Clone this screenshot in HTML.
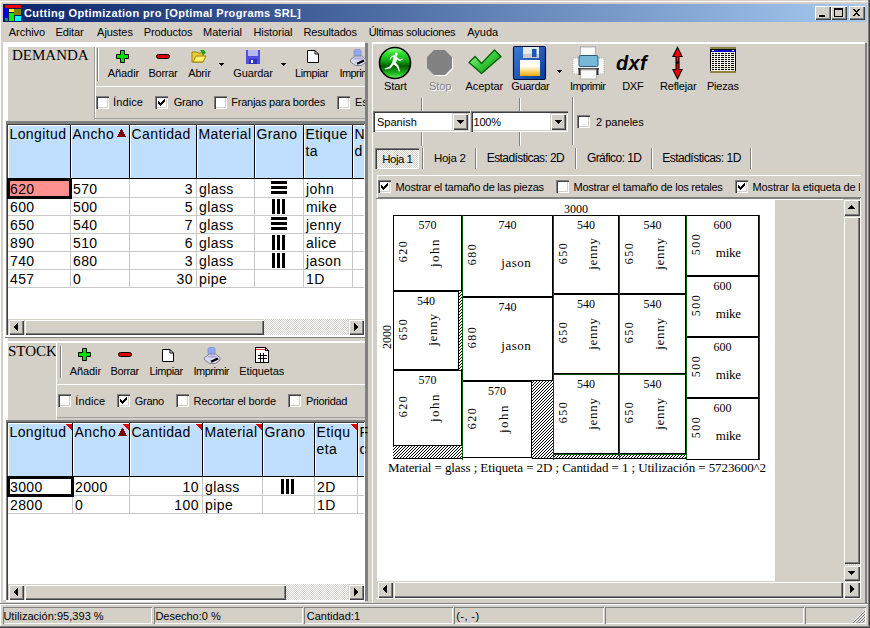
<!DOCTYPE html><html><head><meta charset="utf-8"><style>
html,body{margin:0;padding:0;width:870px;height:628px;overflow:hidden;background:#D4D0C8;}
.a{position:absolute;white-space:pre;}
svg{overflow:visible}
</style></head><body>
<div class="a" style="left:0px;top:1px;width:868px;height:1px;background:#fff;"></div>
<div class="a" style="left:0px;top:1px;width:1px;height:625px;background:#fff;"></div>
<div class="a" style="left:868px;top:0px;width:1px;height:628px;background:#808080;"></div>
<div class="a" style="left:869px;top:0px;width:1px;height:628px;background:#404040;"></div>
<div class="a" style="left:0px;top:626px;width:870px;height:1px;background:#808080;"></div>
<div class="a" style="left:0px;top:627px;width:870px;height:1px;background:#404040;"></div>
<div class="a" style="left:3px;top:4px;width:864px;height:18px;background:linear-gradient(to right,#0A246A,#A6CAF0);"></div>
<svg class="a" style="left:3px;top:4px" width="18" height="18" shape-rendering="crispEdges">
<rect x="0" y="0" width="18" height="18" fill="#0A1A5A"/>
<rect x="2" y="1" width="16" height="3" fill="#F00000"/>
<rect x="1" y="4" width="4" height="10" fill="#0000F0"/>
<rect x="2" y="14" width="3" height="3" fill="#208080"/>
<rect x="6" y="5" width="5" height="3" fill="#FFFF00"/>
<rect x="11" y="5" width="7" height="6" fill="#808000"/>
<rect x="6" y="9" width="5" height="8" fill="#00F000"/>
<rect x="12" y="12" width="6" height="5" fill="#00FFFF"/>
</svg>
<div class="a" style="left:24px;top:7px;font-family:'Liberation Sans', sans-serif;font-size:11px;line-height:12px;color:#fff;font-weight:bold;letter-spacing:0.37px;">Cutting Optimization pro [Optimal Programs SRL]</div>
<div class="a" style="left:815px;top:6px;width:16px;height:14px;background:#D4D0C8;box-shadow: inset 1px 1px #fff, inset -1px -1px #404040, inset -2px -2px #808080;"></div>
<div class="a" style="left:831px;top:6px;width:16px;height:14px;background:#D4D0C8;box-shadow: inset 1px 1px #fff, inset -1px -1px #404040, inset -2px -2px #808080;"></div>
<div class="a" style="left:849px;top:6px;width:16px;height:14px;background:#D4D0C8;box-shadow: inset 1px 1px #fff, inset -1px -1px #404040, inset -2px -2px #808080;"></div>
<svg class="a" style="left:815px;top:6px" width="16" height="14" shape-rendering="crispEdges"><rect x="4" y="9" width="6" height="2" fill="#000"/></svg>
<svg class="a" style="left:831px;top:6px" width="16" height="14" shape-rendering="crispEdges"><path d="M3 2h9v9h-9z M4 4v6h7v-6z" fill="#000" fill-rule="evenodd"/></svg>
<svg class="a" style="left:849px;top:6px" width="16" height="14" shape-rendering="crispEdges"><path d="M4 3h2v1h1v1h1v-1h1v-1h2v1h-1v1h-1v1h-1v1h1v1h1v1h1v1h-2v-1h-1v-1h-1v1h-1v1h-2v-1h1v-1h1v-1h1v-1h-1v-1h-1v-1h-1z" fill="#000"/></svg>
<div class="a" style="left:8.8px;top:25.6px;font-family:'Liberation Sans', sans-serif;font-size:11px;line-height:12px;color:#000;letter-spacing:-0.055px;">Archivo</div>
<div class="a" style="left:55.6px;top:25.6px;font-family:'Liberation Sans', sans-serif;font-size:11px;line-height:12px;color:#000;letter-spacing:-0.125px;">Editar</div>
<div class="a" style="left:97.1px;top:25.6px;font-family:'Liberation Sans', sans-serif;font-size:11px;line-height:12px;color:#000;letter-spacing:-0.04px;">Ajustes</div>
<div class="a" style="left:143.8px;top:25.6px;font-family:'Liberation Sans', sans-serif;font-size:11px;line-height:12px;color:#000;letter-spacing:-0.115px;">Productos</div>
<div class="a" style="left:203.1px;top:25.6px;font-family:'Liberation Sans', sans-serif;font-size:11px;line-height:12px;color:#000;letter-spacing:-0.028px;">Material</div>
<div class="a" style="left:253.5px;top:25.6px;font-family:'Liberation Sans', sans-serif;font-size:11px;line-height:12px;color:#000;letter-spacing:-0.093px;">Historial</div>
<div class="a" style="left:303.5px;top:25.6px;font-family:'Liberation Sans', sans-serif;font-size:11px;line-height:12px;color:#000;letter-spacing:-0.165px;">Resultados</div>
<div class="a" style="left:368.7px;top:25.6px;font-family:'Liberation Sans', sans-serif;font-size:11px;line-height:12px;color:#000;letter-spacing:-0.289px;">Últimas soluciones</div>
<div class="a" style="left:467.2px;top:25.6px;font-family:'Liberation Sans', sans-serif;font-size:11px;line-height:12px;color:#000;letter-spacing:0.0px;">Ayuda</div>
<div class="a" style="left:3px;top:42px;width:362px;height:5px;background:#fff;"></div>
<div class="a" style="left:3px;top:42px;width:5px;height:558px;background:#fff;"></div>
<div class="a" style="left:365px;top:43px;width:3px;height:558px;background:#808080;"></div>
<div class="a" style="left:12px;top:47px;font-family:'Liberation Serif', serif;font-size:15px;line-height:16px;color:#000;">DEMANDA</div>
<div class="a" style="left:94px;top:47px;width:1px;height:73px;background:#A0A0A0;"></div>
<div class="a" style="left:95px;top:47px;width:1px;height:73px;background:#fff;"></div>
<div class="a" style="left:95px;top:47px;width:270px;height:38px;background:#D4D0C8;box-shadow: inset 1px 0 #fff;"></div>
<div class="a" style="left:97px;top:48px;width:1px;height:33px;background:#808080;"></div>
<div class="a" style="left:98px;top:48px;width:1px;height:33px;background:#fff;"></div>
<div class="a" style="left:95px;top:86px;width:270px;height:1px;background:#fff;"></div>
<div class="a" style="left:95px;top:118px;width:270px;height:1px;background:#A0A0A0;"></div>
<svg class="a" style="left:116px;top:50px" width="14" height="14"><path d="M4.5 0.5h4v4h4v4h-4v4h-4v-4h-4v-4h4z" fill="#00E000" stroke="#000" stroke-width="1" stroke-linejoin="round"/></svg>
<div class="a" style="left:107.7px;top:67px;font-family:'Liberation Sans', sans-serif;font-size:11px;line-height:12px;color:#000;letter-spacing:-0.049px;">Añadir</div>
<svg class="a" style="left:156px;top:54px" width="15" height="6"><rect x="0.5" y="0.5" width="13" height="4" rx="2" fill="#E00000" stroke="#000" stroke-width="1"/></svg>
<div class="a" style="left:148.5px;top:67px;font-family:'Liberation Sans', sans-serif;font-size:11px;line-height:12px;color:#000;letter-spacing:-0.26px;">Borrar</div>
<svg class="a" style="left:191px;top:48px" width="16" height="16"><path d="M1 4h5l1 1h5v9h-11z" fill="#E8D040" stroke="#A08000" stroke-width="1"/><path d="M2 14l3-6h10l-3 6z" fill="#FFF070" stroke="#A08000" stroke-width="1"/><path d="M9 2l4 0 2 3-3 2z" fill="#20A020"/></svg>
<div class="a" style="left:188.2px;top:67px;font-family:'Liberation Sans', sans-serif;font-size:11px;line-height:12px;color:#000;letter-spacing:-0.147px;">Abrir</div>
<svg class="a" style="left:219px;top:63px" width="5" height="3" shape-rendering="crispEdges"><path d="M0 0h5v1h-1v1h-1v1h-1v-1h-1v-1h-1z" fill="#000"/></svg>
<svg class="a" style="left:245px;top:49px" width="16" height="16"><path d="M1 1h14v14h-14z" fill="#5050E0"/><rect x="3" y="1" width="10" height="6" fill="#B8B8F0"/><rect x="4" y="10" width="8" height="5" fill="#3030C0"/><rect x="6" y="11" width="2" height="3" fill="#fff"/></svg>
<div class="a" style="left:233.2px;top:67px;font-family:'Liberation Sans', sans-serif;font-size:11px;line-height:12px;color:#000;letter-spacing:-0.108px;">Guardar</div>
<svg class="a" style="left:281px;top:63px" width="5" height="3" shape-rendering="crispEdges"><path d="M0 0h5v1h-1v1h-1v1h-1v-1h-1v-1h-1z" fill="#000"/></svg>
<svg class="a" style="left:307px;top:50px" width="12" height="13"><path d="M0.5 0.5h7.5l3.5 3.5v8.5h-11z" fill="#fff" stroke="#000" stroke-width="1"/><path d="M8 0.5v3.5h3.5" fill="none" stroke="#000" stroke-width="1"/></svg>
<div class="a" style="left:295px;top:67px;font-family:'Liberation Sans', sans-serif;font-size:11px;line-height:12px;color:#000;letter-spacing:-0.411px;">Limpiar</div>
<svg class="a" style="left:350px;top:49px" width="17" height="17"><path d="M4 1.5l2-1h4l1 1v6h-7z" fill="#90A8F8" stroke="#8090D0" stroke-width="0.8"/><path d="M0.5 10.5l5-3.5h6l4.5 3.5v2.5l-4.5 3.5h-6l-5-3.5z" fill="#D8D8F4" stroke="#808088" stroke-width="1"/><path d="M3 10.5l3-2h5l2.5 2z" fill="#A8A8D8"/><path d="M7 14.8l7-3.2" stroke="#000" stroke-width="2.2"/></svg>
<div class="a" style="left:95px;top:46px;width:270px;height:72px;overflow:hidden">
<div class="a" style="left:244.39999999999998px;top:21px;font-family:'Liberation Sans', sans-serif;font-size:11px;line-height:12px;color:#000;letter-spacing:-0.552px;">Imprimir</div>
</div>
<div class="a" style="left:96px;top:96px;width:13px;height:13px;background:#fff;box-shadow: inset 1px 1px #808080, inset 2px 2px #404040, inset -1px -1px #fff, inset -2px -2px #D4D0C8;"></div>
<div class="a" style="left:113.1px;top:96px;font-family:'Liberation Sans', sans-serif;font-size:11px;line-height:12px;color:#000;letter-spacing:0.107px;">Índice</div>
<div class="a" style="left:155px;top:96px;width:13px;height:13px;background:#fff;box-shadow: inset 1px 1px #808080, inset 2px 2px #404040, inset -1px -1px #fff, inset -2px -2px #D4D0C8;"></div>
<svg class="a" style="left:155px;top:96px" width="13" height="13" shape-rendering="crispEdges" fill="#000"><rect x="9" y="3" width="1" height="1"/><rect x="8" y="4" width="1" height="1"/><rect x="9" y="4" width="1" height="1"/><rect x="3" y="5" width="1" height="1"/><rect x="7" y="5" width="1" height="1"/><rect x="8" y="5" width="1" height="1"/><rect x="9" y="5" width="1" height="1"/><rect x="3" y="6" width="1" height="1"/><rect x="4" y="6" width="1" height="1"/><rect x="6" y="6" width="1" height="1"/><rect x="7" y="6" width="1" height="1"/><rect x="8" y="6" width="1" height="1"/><rect x="3" y="7" width="1" height="1"/><rect x="4" y="7" width="1" height="1"/><rect x="5" y="7" width="1" height="1"/><rect x="6" y="7" width="1" height="1"/><rect x="7" y="7" width="1" height="1"/><rect x="4" y="8" width="1" height="1"/><rect x="5" y="8" width="1" height="1"/><rect x="6" y="8" width="1" height="1"/><rect x="5" y="9" width="1" height="1"/></svg>
<div class="a" style="left:173.7px;top:96px;font-family:'Liberation Sans', sans-serif;font-size:11px;line-height:12px;color:#000;letter-spacing:-0.256px;">Grano</div>
<div class="a" style="left:214px;top:96px;width:13px;height:13px;background:#fff;box-shadow: inset 1px 1px #808080, inset 2px 2px #404040, inset -1px -1px #fff, inset -2px -2px #D4D0C8;"></div>
<div class="a" style="left:231.3px;top:96px;font-family:'Liberation Sans', sans-serif;font-size:11px;line-height:12px;color:#000;letter-spacing:-0.25px;">Franjas para bordes</div>
<div class="a" style="left:95px;top:86px;width:270px;height:32px;overflow:hidden">
<div class="a" style="left:242px;top:10px;width:13px;height:13px;background:#fff;box-shadow: inset 1px 1px #808080, inset 2px 2px #404040, inset -1px -1px #fff, inset -2px -2px #D4D0C8;"></div>
<div class="a" style="left:260px;top:10px;font-family:'Liberation Sans', sans-serif;font-size:11px;line-height:12px;color:#000;">Escala</div>
</div>
<div class="a" style="left:6px;top:121px;width:359px;height:1px;background:#808080;"></div>
<div class="a" style="left:6px;top:122px;width:359px;height:2px;background:#808080;"></div>
<div class="a" style="left:6px;top:122px;width:1px;height:213px;background:#808080;"></div>
<div class="a" style="left:7px;top:124px;width:358px;height:1px;background:#404040;"></div>
<div class="a" style="left:7px;top:124px;width:1px;height:211px;background:#404040;"></div>
<div class="a" style="left:6px;top:335px;width:359px;height:2px;background:#fff;"></div>
<div class="a" style="left:8px;top:125px;width:357px;height:210px;background:#fff;"></div>
<div class="a" style="left:8px;top:125px;width:357px;height:53px;background:#C0DFFF;"></div>
<div class="a" style="left:8px;top:125px;width:357px;height:1px;background:#fff;"></div>
<div class="a" style="left:8px;top:178px;width:357px;height:1px;background:#000;"></div>
<div class="a" style="left:8px;top:125px;width:1px;height:53px;background:#fff;"></div>
<div class="a" style="left:70px;top:125px;width:1px;height:54px;background:#000;"></div>
<div class="a" style="left:71px;top:125px;width:1px;height:53px;background:#fff;"></div>
<div class="a" style="left:129px;top:125px;width:1px;height:54px;background:#000;"></div>
<div class="a" style="left:130px;top:125px;width:1px;height:53px;background:#fff;"></div>
<div class="a" style="left:196px;top:125px;width:1px;height:54px;background:#000;"></div>
<div class="a" style="left:197px;top:125px;width:1px;height:53px;background:#fff;"></div>
<div class="a" style="left:254px;top:125px;width:1px;height:54px;background:#000;"></div>
<div class="a" style="left:255px;top:125px;width:1px;height:53px;background:#fff;"></div>
<div class="a" style="left:303px;top:125px;width:1px;height:54px;background:#000;"></div>
<div class="a" style="left:304px;top:125px;width:1px;height:53px;background:#fff;"></div>
<div class="a" style="left:352px;top:125px;width:1px;height:54px;background:#000;"></div>
<div class="a" style="left:353px;top:125px;width:1px;height:53px;background:#fff;"></div>
<div class="a" style="left:9.5px;top:126px;font-family:'Liberation Sans', sans-serif;font-size:14px;line-height:16px;color:#000;letter-spacing:0.4px;">Longitud</div>
<div class="a" style="left:72.5px;top:126px;font-family:'Liberation Sans', sans-serif;font-size:14px;line-height:16px;color:#000;letter-spacing:0.4px;">Ancho</div>
<div class="a" style="left:131.5px;top:126px;font-family:'Liberation Sans', sans-serif;font-size:14px;line-height:16px;color:#000;letter-spacing:0.4px;">Cantidad</div>
<div class="a" style="left:198.5px;top:126px;font-family:'Liberation Sans', sans-serif;font-size:14px;line-height:16px;color:#000;letter-spacing:0.4px;">Material</div>
<div class="a" style="left:256.5px;top:126px;font-family:'Liberation Sans', sans-serif;font-size:14px;line-height:16px;color:#000;letter-spacing:0.4px;">Grano</div>
<div class="a" style="left:305.5px;top:126px;font-family:'Liberation Sans', sans-serif;font-size:14px;line-height:16px;color:#000;letter-spacing:0.4px;">Etique</div>
<div class="a" style="left:305.5px;top:143px;font-family:'Liberation Sans', sans-serif;font-size:14px;line-height:16px;color:#000;letter-spacing:0.4px;">ta</div>
<div class="a" style="left:354.5px;top:126px;font-family:'Liberation Sans', sans-serif;font-size:14px;line-height:16px;color:#000;letter-spacing:0.4px;">N</div>
<div class="a" style="left:354.5px;top:143px;font-family:'Liberation Sans', sans-serif;font-size:14px;line-height:16px;color:#000;letter-spacing:0.4px;">d</div>
<div class="a" style="left:8px;top:197px;width:357px;height:1px;background:#C8C8C8;"></div>
<div class="a" style="left:8px;top:215px;width:357px;height:1px;background:#C8C8C8;"></div>
<div class="a" style="left:8px;top:233px;width:357px;height:1px;background:#C8C8C8;"></div>
<div class="a" style="left:8px;top:251px;width:357px;height:1px;background:#C8C8C8;"></div>
<div class="a" style="left:8px;top:269px;width:357px;height:1px;background:#C8C8C8;"></div>
<div class="a" style="left:8px;top:287px;width:357px;height:1px;background:#C8C8C8;"></div>
<div class="a" style="left:70px;top:179px;width:1px;height:108px;background:#C8C8C8;"></div>
<div class="a" style="left:129px;top:179px;width:1px;height:108px;background:#C8C8C8;"></div>
<div class="a" style="left:196px;top:179px;width:1px;height:108px;background:#C8C8C8;"></div>
<div class="a" style="left:254px;top:179px;width:1px;height:108px;background:#C8C8C8;"></div>
<div class="a" style="left:303px;top:179px;width:1px;height:108px;background:#C8C8C8;"></div>
<div class="a" style="left:352px;top:179px;width:1px;height:108px;background:#C8C8C8;"></div>
<div class="a" style="left:7px;top:178px;width:65px;height:21px;background:#FF9090;box-shadow: inset 0 0 0 3px #000;"></div>
<div class="a" style="left:10px;top:181px;font-family:'Liberation Sans', sans-serif;font-size:14px;line-height:16px;color:#000;letter-spacing:0.4px;">620</div>
<div class="a" style="left:73px;top:181px;font-family:'Liberation Sans', sans-serif;font-size:14px;line-height:16px;color:#000;letter-spacing:0.4px;">570</div>
<div class="a" style="right:677.1px;top:181px;font-family:'Liberation Sans', sans-serif;font-size:14px;line-height:16px;color:#000;letter-spacing:0.4px;">3</div>
<div class="a" style="left:199px;top:181px;font-family:'Liberation Sans', sans-serif;font-size:14px;line-height:16px;color:#000;letter-spacing:0.4px;">glass</div>
<svg class="a" style="left:271px;top:181px" width="16" height="13" shape-rendering="crispEdges"><rect x="0" y="0" width="16" height="3" fill="#000"/><rect x="0" y="5" width="16" height="3" fill="#000"/><rect x="0" y="10" width="16" height="3" fill="#000"/></svg>
<div class="a" style="left:306px;top:181px;font-family:'Liberation Sans', sans-serif;font-size:14px;line-height:16px;color:#000;letter-spacing:0.4px;">john</div>
<div class="a" style="left:10px;top:199px;font-family:'Liberation Sans', sans-serif;font-size:14px;line-height:16px;color:#000;letter-spacing:0.4px;">600</div>
<div class="a" style="left:73px;top:199px;font-family:'Liberation Sans', sans-serif;font-size:14px;line-height:16px;color:#000;letter-spacing:0.4px;">500</div>
<div class="a" style="right:677.1px;top:199px;font-family:'Liberation Sans', sans-serif;font-size:14px;line-height:16px;color:#000;letter-spacing:0.4px;">5</div>
<div class="a" style="left:199px;top:199px;font-family:'Liberation Sans', sans-serif;font-size:14px;line-height:16px;color:#000;letter-spacing:0.4px;">glass</div>
<svg class="a" style="left:272px;top:199px" width="14" height="15" shape-rendering="crispEdges"><rect x="0" y="0" width="3" height="15" fill="#000"/><rect x="5" y="0" width="3" height="15" fill="#000"/><rect x="10" y="0" width="3" height="15" fill="#000"/></svg>
<div class="a" style="left:306px;top:199px;font-family:'Liberation Sans', sans-serif;font-size:14px;line-height:16px;color:#000;letter-spacing:0.4px;">mike</div>
<div class="a" style="left:10px;top:217px;font-family:'Liberation Sans', sans-serif;font-size:14px;line-height:16px;color:#000;letter-spacing:0.4px;">650</div>
<div class="a" style="left:73px;top:217px;font-family:'Liberation Sans', sans-serif;font-size:14px;line-height:16px;color:#000;letter-spacing:0.4px;">540</div>
<div class="a" style="right:677.1px;top:217px;font-family:'Liberation Sans', sans-serif;font-size:14px;line-height:16px;color:#000;letter-spacing:0.4px;">7</div>
<div class="a" style="left:199px;top:217px;font-family:'Liberation Sans', sans-serif;font-size:14px;line-height:16px;color:#000;letter-spacing:0.4px;">glass</div>
<svg class="a" style="left:271px;top:217px" width="16" height="13" shape-rendering="crispEdges"><rect x="0" y="0" width="16" height="3" fill="#000"/><rect x="0" y="5" width="16" height="3" fill="#000"/><rect x="0" y="10" width="16" height="3" fill="#000"/></svg>
<div class="a" style="left:306px;top:217px;font-family:'Liberation Sans', sans-serif;font-size:14px;line-height:16px;color:#000;letter-spacing:0.4px;">jenny</div>
<div class="a" style="left:10px;top:235px;font-family:'Liberation Sans', sans-serif;font-size:14px;line-height:16px;color:#000;letter-spacing:0.4px;">890</div>
<div class="a" style="left:73px;top:235px;font-family:'Liberation Sans', sans-serif;font-size:14px;line-height:16px;color:#000;letter-spacing:0.4px;">510</div>
<div class="a" style="right:677.1px;top:235px;font-family:'Liberation Sans', sans-serif;font-size:14px;line-height:16px;color:#000;letter-spacing:0.4px;">6</div>
<div class="a" style="left:199px;top:235px;font-family:'Liberation Sans', sans-serif;font-size:14px;line-height:16px;color:#000;letter-spacing:0.4px;">glass</div>
<svg class="a" style="left:272px;top:235px" width="14" height="15" shape-rendering="crispEdges"><rect x="0" y="0" width="3" height="15" fill="#000"/><rect x="5" y="0" width="3" height="15" fill="#000"/><rect x="10" y="0" width="3" height="15" fill="#000"/></svg>
<div class="a" style="left:306px;top:235px;font-family:'Liberation Sans', sans-serif;font-size:14px;line-height:16px;color:#000;letter-spacing:0.4px;">alice</div>
<div class="a" style="left:10px;top:253px;font-family:'Liberation Sans', sans-serif;font-size:14px;line-height:16px;color:#000;letter-spacing:0.4px;">740</div>
<div class="a" style="left:73px;top:253px;font-family:'Liberation Sans', sans-serif;font-size:14px;line-height:16px;color:#000;letter-spacing:0.4px;">680</div>
<div class="a" style="right:677.1px;top:253px;font-family:'Liberation Sans', sans-serif;font-size:14px;line-height:16px;color:#000;letter-spacing:0.4px;">3</div>
<div class="a" style="left:199px;top:253px;font-family:'Liberation Sans', sans-serif;font-size:14px;line-height:16px;color:#000;letter-spacing:0.4px;">glass</div>
<svg class="a" style="left:272px;top:253px" width="14" height="15" shape-rendering="crispEdges"><rect x="0" y="0" width="3" height="15" fill="#000"/><rect x="5" y="0" width="3" height="15" fill="#000"/><rect x="10" y="0" width="3" height="15" fill="#000"/></svg>
<div class="a" style="left:306px;top:253px;font-family:'Liberation Sans', sans-serif;font-size:14px;line-height:16px;color:#000;letter-spacing:0.4px;">jason</div>
<div class="a" style="left:10px;top:271px;font-family:'Liberation Sans', sans-serif;font-size:14px;line-height:16px;color:#000;letter-spacing:0.4px;">457</div>
<div class="a" style="left:73px;top:271px;font-family:'Liberation Sans', sans-serif;font-size:14px;line-height:16px;color:#000;letter-spacing:0.4px;">0</div>
<div class="a" style="right:677.1px;top:271px;font-family:'Liberation Sans', sans-serif;font-size:14px;line-height:16px;color:#000;letter-spacing:0.4px;">30</div>
<div class="a" style="left:199px;top:271px;font-family:'Liberation Sans', sans-serif;font-size:14px;line-height:16px;color:#000;letter-spacing:0.4px;">pipe</div>
<div class="a" style="left:306px;top:271px;font-family:'Liberation Sans', sans-serif;font-size:14px;line-height:16px;color:#000;letter-spacing:0.4px;">1D</div>
<div class="a" style="left:8px;top:319px;width:356px;height:16px;background:repeating-conic-gradient(#D4D0C8 0% 25%, #fff 0% 50%) 0 0/2px 2px;"></div>
<div class="a" style="left:8px;top:319px;width:16px;height:16px;background:#D4D0C8;box-shadow: inset 1px 1px #D4D0C8, inset 2px 2px #fff, inset -1px -1px #404040, inset -2px -2px #808080;"></div>
<svg class="a" style="left:13px;top:323px" width="5" height="8" shape-rendering="crispEdges"><path d="M4 0h1v8h-1v-1h-1v-1h-1v-1h-1v-2h1v-1h1v-1h1z" fill="#000"/></svg>
<div class="a" style="left:24px;top:319px;width:240px;height:16px;background:#D4D0C8;box-shadow: inset 1px 1px #D4D0C8, inset 2px 2px #fff, inset -1px -1px #404040, inset -2px -2px #808080;"></div>
<div class="a" style="left:348px;top:319px;width:16px;height:16px;background:#D4D0C8;box-shadow: inset 1px 1px #D4D0C8, inset 2px 2px #fff, inset -1px -1px #404040, inset -2px -2px #808080;"></div>
<svg class="a" style="left:354px;top:323px" width="5" height="8" shape-rendering="crispEdges"><path d="M0 0h1v1h1v1h1v1h1v2h-1v1h-1v1h-1v1h-1z" fill="#000"/></svg>
<div class="a" style="left:364px;top:124px;width:1px;height:213px;background:#fff;"></div>
<svg class="a" style="left:117px;top:129px" width="9" height="8" shape-rendering="crispEdges"><path d="M4 0h1v1h1v2h1v2h1v2h1v1h-9v-1h1v-2h1v-2h1v-2h1z" fill="#800000"/></svg>
<div class="a" style="left:6px;top:336px;width:359px;height:1px;background:#fff;"></div>
<div class="a" style="left:5px;top:337px;width:360px;height:1px;background:#808080;"></div>
<div class="a" style="left:5px;top:341px;width:360px;height:2px;background:#fff;"></div>
<div class="a" style="left:8px;top:343px;font-family:'Liberation Serif', serif;font-size:15px;line-height:16px;color:#000;">STOCK</div>
<div class="a" style="left:56px;top:343px;width:1px;height:77px;background:#fff;"></div>
<div class="a" style="left:60px;top:346px;width:1px;height:32px;background:#808080;"></div>
<div class="a" style="left:61px;top:346px;width:1px;height:32px;background:#fff;"></div>
<div class="a" style="left:57px;top:384px;width:308px;height:1px;background:#fff;"></div>
<div class="a" style="left:57px;top:417px;width:308px;height:1px;background:#A0A0A0;"></div>
<svg class="a" style="left:78px;top:348px" width="14" height="14"><path d="M4.5 0.5h4v4h4v4h-4v4h-4v-4h-4v-4h4z" fill="#00E000" stroke="#000" stroke-width="1" stroke-linejoin="round"/></svg>
<div class="a" style="left:69.8px;top:364.5px;font-family:'Liberation Sans', sans-serif;font-size:11px;line-height:12px;color:#000;letter-spacing:-0.099px;">Añadir</div>
<svg class="a" style="left:118px;top:352px" width="15" height="6"><rect x="0.5" y="0.5" width="13" height="4" rx="2" fill="#E00000" stroke="#000" stroke-width="1"/></svg>
<div class="a" style="left:110.6px;top:364.5px;font-family:'Liberation Sans', sans-serif;font-size:11px;line-height:12px;color:#000;letter-spacing:-0.394px;">Borrar</div>
<svg class="a" style="left:162px;top:349px" width="12" height="13"><path d="M0.5 0.5h7.5l3.5 3.5v8.5h-11z" fill="#fff" stroke="#000" stroke-width="1"/><path d="M8 0.5v3.5h3.5" fill="none" stroke="#000" stroke-width="1"/></svg>
<div class="a" style="left:149.5px;top:364.5px;font-family:'Liberation Sans', sans-serif;font-size:11px;line-height:12px;color:#000;letter-spacing:-0.397px;">Limpiar</div>
<svg class="a" style="left:204px;top:347px" width="17" height="17"><path d="M4 1.5l2-1h4l1 1v6h-7z" fill="#90A8F8" stroke="#8090D0" stroke-width="0.8"/><path d="M0.5 10.5l5-3.5h6l4.5 3.5v2.5l-4.5 3.5h-6l-5-3.5z" fill="#D8D8F4" stroke="#808088" stroke-width="1"/><path d="M3 10.5l3-2h5l2.5 2z" fill="#A8A8D8"/><path d="M7 14.8l7-3.2" stroke="#000" stroke-width="2.2"/></svg>
<div class="a" style="left:193.6px;top:364.5px;font-family:'Liberation Sans', sans-serif;font-size:11px;line-height:12px;color:#000;letter-spacing:-0.552px;">Imprimir</div>
<svg class="a" style="left:255px;top:347px" width="15" height="17" shape-rendering="crispEdges"><path d="M0.5 0.5h10l3 3v12h-13z" fill="#fff" stroke="#000" stroke-width="1"/><path d="M10.5 0.5v3h3" fill="none" stroke="#000" stroke-width="1"/><rect x="1" y="2" width="9" height="1" fill="#E03030"/><path d="M5.5 6v9M8.5 6v9M3 8.5h9M3 11.5h9" stroke="#000" stroke-width="1"/></svg>
<div class="a" style="left:239.3px;top:364.5px;font-family:'Liberation Sans', sans-serif;font-size:11px;line-height:12px;color:#000;letter-spacing:-0.119px;">Etiquetas</div>
<div class="a" style="left:58px;top:394px;width:13px;height:13px;background:#fff;box-shadow: inset 1px 1px #808080, inset 2px 2px #404040, inset -1px -1px #fff, inset -2px -2px #D4D0C8;"></div>
<div class="a" style="left:75.3px;top:395px;font-family:'Liberation Sans', sans-serif;font-size:11px;line-height:12px;color:#000;letter-spacing:0.107px;">Índice</div>
<div class="a" style="left:117px;top:394px;width:13px;height:13px;background:#fff;box-shadow: inset 1px 1px #808080, inset 2px 2px #404040, inset -1px -1px #fff, inset -2px -2px #D4D0C8;"></div>
<svg class="a" style="left:117px;top:394px" width="13" height="13" shape-rendering="crispEdges" fill="#000"><rect x="9" y="3" width="1" height="1"/><rect x="8" y="4" width="1" height="1"/><rect x="9" y="4" width="1" height="1"/><rect x="3" y="5" width="1" height="1"/><rect x="7" y="5" width="1" height="1"/><rect x="8" y="5" width="1" height="1"/><rect x="9" y="5" width="1" height="1"/><rect x="3" y="6" width="1" height="1"/><rect x="4" y="6" width="1" height="1"/><rect x="6" y="6" width="1" height="1"/><rect x="7" y="6" width="1" height="1"/><rect x="8" y="6" width="1" height="1"/><rect x="3" y="7" width="1" height="1"/><rect x="4" y="7" width="1" height="1"/><rect x="5" y="7" width="1" height="1"/><rect x="6" y="7" width="1" height="1"/><rect x="7" y="7" width="1" height="1"/><rect x="4" y="8" width="1" height="1"/><rect x="5" y="8" width="1" height="1"/><rect x="6" y="8" width="1" height="1"/><rect x="5" y="9" width="1" height="1"/></svg>
<div class="a" style="left:134.7px;top:395px;font-family:'Liberation Sans', sans-serif;font-size:11px;line-height:12px;color:#000;letter-spacing:-0.256px;">Grano</div>
<div class="a" style="left:176px;top:394px;width:13px;height:13px;background:#fff;box-shadow: inset 1px 1px #808080, inset 2px 2px #404040, inset -1px -1px #fff, inset -2px -2px #D4D0C8;"></div>
<div class="a" style="left:193.6px;top:395px;font-family:'Liberation Sans', sans-serif;font-size:11px;line-height:12px;color:#000;letter-spacing:-0.159px;">Recortar el borde</div>
<div class="a" style="left:288px;top:394px;width:13px;height:13px;background:#fff;box-shadow: inset 1px 1px #808080, inset 2px 2px #404040, inset -1px -1px #fff, inset -2px -2px #D4D0C8;"></div>
<div class="a" style="left:305.9px;top:395px;font-family:'Liberation Sans', sans-serif;font-size:11px;line-height:12px;color:#000;letter-spacing:-0.303px;">Prioridad</div>
<div class="a" style="left:6px;top:420px;width:359px;height:2px;background:#808080;"></div>
<div class="a" style="left:6px;top:420px;width:1px;height:180px;background:#808080;"></div>
<div class="a" style="left:7px;top:422px;width:358px;height:1px;background:#404040;"></div>
<div class="a" style="left:7px;top:422px;width:1px;height:178px;background:#404040;"></div>
<div class="a" style="left:6px;top:600px;width:359px;height:2px;background:#fff;"></div>
<div class="a" style="left:8px;top:423px;width:357px;height:177px;background:#fff;"></div>
<div class="a" style="left:8px;top:423px;width:357px;height:53px;background:#C0DFFF;"></div>
<div class="a" style="left:8px;top:423px;width:357px;height:1px;background:#fff;"></div>
<div class="a" style="left:8px;top:476px;width:357px;height:1px;background:#000;"></div>
<div class="a" style="left:8px;top:423px;width:1px;height:53px;background:#fff;"></div>
<div class="a" style="left:72px;top:423px;width:1px;height:54px;background:#000;"></div>
<div class="a" style="left:73px;top:423px;width:1px;height:53px;background:#fff;"></div>
<div class="a" style="left:129px;top:423px;width:1px;height:54px;background:#000;"></div>
<div class="a" style="left:130px;top:423px;width:1px;height:53px;background:#fff;"></div>
<div class="a" style="left:202px;top:423px;width:1px;height:54px;background:#000;"></div>
<div class="a" style="left:203px;top:423px;width:1px;height:53px;background:#fff;"></div>
<div class="a" style="left:262px;top:423px;width:1px;height:54px;background:#000;"></div>
<div class="a" style="left:263px;top:423px;width:1px;height:53px;background:#fff;"></div>
<div class="a" style="left:314px;top:423px;width:1px;height:54px;background:#000;"></div>
<div class="a" style="left:315px;top:423px;width:1px;height:53px;background:#fff;"></div>
<div class="a" style="left:357px;top:423px;width:1px;height:54px;background:#000;"></div>
<div class="a" style="left:358px;top:423px;width:1px;height:53px;background:#fff;"></div>
<div class="a" style="left:9.5px;top:424px;font-family:'Liberation Sans', sans-serif;font-size:14px;line-height:16px;color:#000;letter-spacing:0.4px;">Longitud</div>
<div class="a" style="left:74.5px;top:424px;font-family:'Liberation Sans', sans-serif;font-size:14px;line-height:16px;color:#000;letter-spacing:0.4px;">Ancho</div>
<div class="a" style="left:131.5px;top:424px;font-family:'Liberation Sans', sans-serif;font-size:14px;line-height:16px;color:#000;letter-spacing:0.4px;">Cantidad</div>
<div class="a" style="left:204.5px;top:424px;font-family:'Liberation Sans', sans-serif;font-size:14px;line-height:16px;color:#000;letter-spacing:0.4px;">Material</div>
<div class="a" style="left:264.5px;top:424px;font-family:'Liberation Sans', sans-serif;font-size:14px;line-height:16px;color:#000;letter-spacing:0.4px;">Grano</div>
<div class="a" style="left:316.5px;top:424px;font-family:'Liberation Sans', sans-serif;font-size:14px;line-height:16px;color:#000;letter-spacing:0.4px;">Etiqu</div>
<div class="a" style="left:316.5px;top:441px;font-family:'Liberation Sans', sans-serif;font-size:14px;line-height:16px;color:#000;letter-spacing:0.4px;">eta</div>
<div class="a" style="left:359.5px;top:424px;font-family:'Liberation Sans', sans-serif;font-size:14px;line-height:16px;color:#000;letter-spacing:0.4px;">F</div>
<div class="a" style="left:359.5px;top:441px;font-family:'Liberation Sans', sans-serif;font-size:14px;line-height:16px;color:#000;letter-spacing:0.4px;">c</div>
<svg class="a" style="left:66px;top:424px" width="6" height="6" shape-rendering="crispEdges"><path d="M0 0h6v6h-1v-1h-1v-1h-1v-1h-1v-1h-1v-1h-1z" fill="#E00000"/></svg>
<svg class="a" style="left:123px;top:424px" width="6" height="6" shape-rendering="crispEdges"><path d="M0 0h6v6h-1v-1h-1v-1h-1v-1h-1v-1h-1v-1h-1z" fill="#E00000"/></svg>
<svg class="a" style="left:196px;top:424px" width="6" height="6" shape-rendering="crispEdges"><path d="M0 0h6v6h-1v-1h-1v-1h-1v-1h-1v-1h-1v-1h-1z" fill="#E00000"/></svg>
<svg class="a" style="left:256px;top:424px" width="6" height="6" shape-rendering="crispEdges"><path d="M0 0h6v6h-1v-1h-1v-1h-1v-1h-1v-1h-1v-1h-1z" fill="#E00000"/></svg>
<svg class="a" style="left:351px;top:424px" width="6" height="6" shape-rendering="crispEdges"><path d="M0 0h6v6h-1v-1h-1v-1h-1v-1h-1v-1h-1v-1h-1z" fill="#E00000"/></svg>
<div class="a" style="left:8px;top:495px;width:357px;height:1px;background:#C8C8C8;"></div>
<div class="a" style="left:8px;top:513px;width:357px;height:1px;background:#C8C8C8;"></div>
<div class="a" style="left:72px;top:477px;width:1px;height:36px;background:#C8C8C8;"></div>
<div class="a" style="left:129px;top:477px;width:1px;height:36px;background:#C8C8C8;"></div>
<div class="a" style="left:202px;top:477px;width:1px;height:36px;background:#C8C8C8;"></div>
<div class="a" style="left:262px;top:477px;width:1px;height:36px;background:#C8C8C8;"></div>
<div class="a" style="left:314px;top:477px;width:1px;height:36px;background:#C8C8C8;"></div>
<div class="a" style="left:357px;top:477px;width:1px;height:36px;background:#C8C8C8;"></div>
<div class="a" style="left:7px;top:476px;width:67px;height:21px;background:#fff;box-shadow: inset 0 0 0 3px #000;"></div>
<div class="a" style="left:10px;top:479px;font-family:'Liberation Sans', sans-serif;font-size:14px;line-height:16px;color:#000;letter-spacing:0.4px;">3000</div>
<div class="a" style="left:75px;top:479px;font-family:'Liberation Sans', sans-serif;font-size:14px;line-height:16px;color:#000;letter-spacing:0.4px;">2000</div>
<div class="a" style="right:671.1px;top:479px;font-family:'Liberation Sans', sans-serif;font-size:14px;line-height:16px;color:#000;letter-spacing:0.4px;">10</div>
<div class="a" style="left:205px;top:479px;font-family:'Liberation Sans', sans-serif;font-size:14px;line-height:16px;color:#000;letter-spacing:0.4px;">glass</div>
<svg class="a" style="left:281px;top:479px" width="14" height="15" shape-rendering="crispEdges"><rect x="0" y="0" width="3" height="15" fill="#000"/><rect x="5" y="0" width="3" height="15" fill="#000"/><rect x="10" y="0" width="3" height="15" fill="#000"/></svg>
<div class="a" style="left:317px;top:479px;font-family:'Liberation Sans', sans-serif;font-size:14px;line-height:16px;color:#000;letter-spacing:0.4px;">2D</div>
<div class="a" style="left:10px;top:497px;font-family:'Liberation Sans', sans-serif;font-size:14px;line-height:16px;color:#000;letter-spacing:0.4px;">2800</div>
<div class="a" style="left:75px;top:497px;font-family:'Liberation Sans', sans-serif;font-size:14px;line-height:16px;color:#000;letter-spacing:0.4px;">0</div>
<div class="a" style="right:671.1px;top:497px;font-family:'Liberation Sans', sans-serif;font-size:14px;line-height:16px;color:#000;letter-spacing:0.4px;">100</div>
<div class="a" style="left:205px;top:497px;font-family:'Liberation Sans', sans-serif;font-size:14px;line-height:16px;color:#000;letter-spacing:0.4px;">pipe</div>
<div class="a" style="left:317px;top:497px;font-family:'Liberation Sans', sans-serif;font-size:14px;line-height:16px;color:#000;letter-spacing:0.4px;">1D</div>
<div class="a" style="left:8px;top:584px;width:356px;height:16px;background:repeating-conic-gradient(#D4D0C8 0% 25%, #fff 0% 50%) 0 0/2px 2px;"></div>
<div class="a" style="left:8px;top:584px;width:16px;height:16px;background:#D4D0C8;box-shadow: inset 1px 1px #D4D0C8, inset 2px 2px #fff, inset -1px -1px #404040, inset -2px -2px #808080;"></div>
<svg class="a" style="left:13px;top:588px" width="5" height="8" shape-rendering="crispEdges"><path d="M4 0h1v8h-1v-1h-1v-1h-1v-1h-1v-2h1v-1h1v-1h1z" fill="#000"/></svg>
<div class="a" style="left:24px;top:584px;width:262px;height:16px;background:#D4D0C8;box-shadow: inset 1px 1px #D4D0C8, inset 2px 2px #fff, inset -1px -1px #404040, inset -2px -2px #808080;"></div>
<div class="a" style="left:348px;top:584px;width:16px;height:16px;background:#D4D0C8;box-shadow: inset 1px 1px #D4D0C8, inset 2px 2px #fff, inset -1px -1px #404040, inset -2px -2px #808080;"></div>
<svg class="a" style="left:354px;top:588px" width="5" height="8" shape-rendering="crispEdges"><path d="M0 0h1v1h1v1h1v1h1v2h-1v1h-1v1h-1v1h-1z" fill="#000"/></svg>
<div class="a" style="left:364px;top:422px;width:1px;height:180px;background:#fff;"></div>
<svg class="a" style="left:118px;top:428px" width="9" height="8" shape-rendering="crispEdges"><path d="M4 0h1v1h1v2h1v2h1v2h1v1h-9v-1h1v-2h1v-2h1v-2h1z" fill="#800000"/></svg>
<div class="a" style="left:372px;top:42px;width:493px;height:2px;background:#fff;"></div>
<div class="a" style="left:372px;top:42px;width:1px;height:562px;background:#fff;"></div>
<div class="a" style="left:865px;top:43px;width:2px;height:561px;background:#808080;"></div>
<svg class="a" style="left:378px;top:46px" width="34" height="34">
<defs><linearGradient id="gstart" x1="0" y1="0" x2="0" y2="1">
<stop offset="0" stop-color="#A8FFA8"/><stop offset="0.18" stop-color="#30E030"/><stop offset="0.45" stop-color="#10A010"/><stop offset="0.6" stop-color="#005A00"/><stop offset="0.85" stop-color="#20C020"/><stop offset="1" stop-color="#70F070"/></linearGradient></defs>
<circle cx="17" cy="17" r="15.5" fill="url(#gstart)" stroke="#000" stroke-width="1.6"/>
<path d="M18.5 6.5c1.2 0 1.6 1.2 1 2.2l-1 2 3.5 2.8 2.5-1.2 0.6 0.9-3.2 2-2.8-1.6-1.2 3.2 2.6 3 1.6 5.4-1.2 0.4-2.2-4.8-3-2.2-3 3.6-5.6 1.4-0.3-1.2 4.8-1.8 2.6-4.2 1.4-5.6-1.6 0.4-1.6 2.6-1-0.4 2-3.4 3.2-1c0.2-1.2 0.6-2.4 1.3-2.8z" fill="#F0FFF0"/>
</svg>
<svg class="a" style="left:427px;top:50px" width="28" height="28">
<path d="M8 1h11l7 7v11l-7 7h-11l-7-7v-11z" fill="#fff"/>
<path d="M7 0h11l7 7v11l-7 7h-11l-7-7v-11z" fill="#828282"/>
</svg>
<svg class="a" style="left:468px;top:49px" width="34" height="26">
<defs><linearGradient id="gchk" x1="0" y1="0" x2="1" y2="1"><stop offset="0" stop-color="#C0FFC0"/><stop offset="0.45" stop-color="#40D040"/><stop offset="1" stop-color="#008800"/></linearGradient></defs>
<path d="M1 13.5l6-6 6.5 7 13-13.5 6.5 6.5-19.5 17z" fill="url(#gchk)" stroke="#006000" stroke-width="1.3" stroke-linejoin="round"/>
</svg>
<svg class="a" style="left:513px;top:46px" width="34" height="34">
<defs><linearGradient id="glab" x1="0" y1="0" x2="0" y2="1"><stop offset="0" stop-color="#fff"/><stop offset="0.4" stop-color="#FFFDF0"/><stop offset="0.75" stop-color="#F8D060"/><stop offset="1" stop-color="#F0A800"/></linearGradient>
<linearGradient id="gfl" x1="0" y1="0" x2="1" y2="1"><stop offset="0" stop-color="#3A7CD8"/><stop offset="1" stop-color="#0A3A98"/></linearGradient></defs>
<rect x="0.5" y="0.5" width="32" height="33" rx="1.5" fill="url(#gfl)" stroke="#001040" stroke-width="1.2"/>
<rect x="10" y="1" width="16" height="11" fill="#E8E8E8"/>
<rect x="10" y="8" width="16" height="4" fill="#C8C8C8"/>
<rect x="19" y="3" width="4.5" height="8" fill="#1A5ABA"/>
<rect x="7" y="14" width="20" height="16" fill="url(#glab)"/>
</svg>
<svg class="a" style="left:557px;top:70px" width="5" height="3" shape-rendering="crispEdges"><path d="M0 0h5v1h-1v1h-1v1h-1v-1h-1v-1h-1z" fill="#000"/></svg>
<svg class="a" style="left:572px;top:46px" width="33" height="34">
<rect x="8.5" y="1" width="15" height="10" fill="#FAFAFA" stroke="#A0A0A0" stroke-width="0.8"/>
<path d="M1 12h31v16h-31z" fill="#F4F4F4" stroke="#909090" stroke-width="0.6" stroke-dasharray="1 1"/>
<rect x="7" y="9.5" width="19" height="11" rx="1.5" fill="#76B8D8" stroke="#2A5A78" stroke-width="1"/>
<rect x="6" y="22" width="21" height="1.5" fill="#555"/>
<rect x="8.5" y="24" width="16" height="9" fill="#FAFAFA" stroke="#909090" stroke-width="0.6"/>
<rect x="6.5" y="22" width="2" height="7" fill="#333"/><rect x="24.5" y="22" width="2" height="7" fill="#333"/>
</svg>
<div class="a" style="left:616px;top:52px;font-family:'Liberation Sans', sans-serif;font-size:20px;line-height:22px;color:#000;font-weight:bold;letter-spacing:0.333px;font-style:italic;">dxf</div>
<svg class="a" style="left:672px;top:46px" width="12" height="34">
<path d="M5.5 1.2l4.6 9.3h-3.1v5.7h-3v-5.7h-3.1z" fill="#F00000" stroke="#000" stroke-width="1.1" stroke-linejoin="miter"/>
<path d="M5.5 32.8l-4.6-9.3h3.1v-6.6h3v6.6h3.1z" fill="#F00000" stroke="#000" stroke-width="1.1" stroke-linejoin="miter"/>
<rect x="4" y="15.6" width="3" height="1.6" fill="#000"/>
</svg>
<svg class="a" style="left:710px;top:47px" width="26" height="26" shape-rendering="crispEdges">
<rect x="0" y="0" width="26" height="2" fill="#8C8440"/>
<rect x="0" y="2" width="26" height="23" fill="#000"/>
<rect x="1" y="3" width="24" height="2" fill="#0000D0"/>
<rect x="2" y="3" width="2" height="1" fill="#fff"/><rect x="22" y="3" width="2" height="1" fill="#fff"/>
<rect x="1" y="5" width="24" height="19" fill="#F4F0E4"/>
<rect x="2" y="6" width="2" height="1" fill="#000"/><rect x="5" y="6" width="2" height="1" fill="#000"/><rect x="8" y="6" width="2" height="1" fill="#000"/><rect x="11" y="6" width="3" height="1" fill="#000"/><rect x="15" y="6" width="2" height="1" fill="#000"/><rect x="18" y="6" width="2" height="1" fill="#000"/><rect x="21" y="6" width="3" height="1" fill="#000"/><rect x="2" y="8" width="2" height="1" fill="#000"/><rect x="5" y="8" width="2" height="1" fill="#000"/><rect x="8" y="8" width="2" height="1" fill="#000"/><rect x="11" y="8" width="3" height="1" fill="#000"/><rect x="15" y="8" width="2" height="1" fill="#000"/><rect x="18" y="8" width="2" height="1" fill="#000"/><rect x="21" y="8" width="3" height="1" fill="#000"/><rect x="2" y="10" width="2" height="1" fill="#000"/><rect x="5" y="10" width="2" height="1" fill="#000"/><rect x="8" y="10" width="2" height="1" fill="#000"/><rect x="11" y="10" width="3" height="1" fill="#000"/><rect x="15" y="10" width="2" height="1" fill="#000"/><rect x="18" y="10" width="2" height="1" fill="#000"/><rect x="21" y="10" width="3" height="1" fill="#000"/><rect x="2" y="12" width="2" height="1" fill="#000"/><rect x="5" y="12" width="2" height="1" fill="#000"/><rect x="8" y="12" width="2" height="1" fill="#000"/><rect x="11" y="12" width="3" height="1" fill="#000"/><rect x="15" y="12" width="2" height="1" fill="#000"/><rect x="18" y="12" width="2" height="1" fill="#000"/><rect x="21" y="12" width="3" height="1" fill="#000"/><rect x="2" y="14" width="2" height="1" fill="#000"/><rect x="5" y="14" width="2" height="1" fill="#000"/><rect x="8" y="14" width="2" height="1" fill="#000"/><rect x="11" y="14" width="3" height="1" fill="#000"/><rect x="15" y="14" width="2" height="1" fill="#000"/><rect x="18" y="14" width="2" height="1" fill="#000"/><rect x="21" y="14" width="3" height="1" fill="#000"/><rect x="2" y="16" width="2" height="1" fill="#000"/><rect x="5" y="16" width="2" height="1" fill="#000"/><rect x="8" y="16" width="2" height="1" fill="#000"/><rect x="11" y="16" width="3" height="1" fill="#000"/><rect x="15" y="16" width="2" height="1" fill="#000"/><rect x="18" y="16" width="2" height="1" fill="#000"/><rect x="21" y="16" width="3" height="1" fill="#000"/><rect x="2" y="18" width="2" height="1" fill="#000"/><rect x="5" y="18" width="2" height="1" fill="#000"/><rect x="8" y="18" width="2" height="1" fill="#000"/><rect x="11" y="18" width="3" height="1" fill="#000"/><rect x="15" y="18" width="2" height="1" fill="#000"/><rect x="18" y="18" width="2" height="1" fill="#000"/><rect x="21" y="18" width="3" height="1" fill="#000"/><rect x="2" y="20" width="2" height="1" fill="#000"/><rect x="5" y="20" width="2" height="1" fill="#000"/><rect x="8" y="20" width="2" height="1" fill="#000"/><rect x="11" y="20" width="3" height="1" fill="#000"/><rect x="15" y="20" width="2" height="1" fill="#000"/><rect x="18" y="20" width="2" height="1" fill="#000"/><rect x="21" y="20" width="3" height="1" fill="#000"/><rect x="2" y="22" width="2" height="1" fill="#000"/><rect x="5" y="22" width="2" height="1" fill="#000"/><rect x="8" y="22" width="2" height="1" fill="#000"/><rect x="11" y="22" width="3" height="1" fill="#000"/><rect x="15" y="22" width="2" height="1" fill="#000"/><rect x="18" y="22" width="2" height="1" fill="#000"/><rect x="21" y="22" width="3" height="1" fill="#000"/>
<rect x="0" y="24" width="26" height="2" fill="#8C8440"/>
</svg>
<div class="a" style="left:384.09999999999997px;top:80.4px;font-family:'Liberation Sans', sans-serif;font-size:11px;line-height:12px;color:#000;letter-spacing:-0.147px;">Start</div>
<div class="a" style="left:428.9px;top:80.4px;font-family:'Liberation Sans', sans-serif;font-size:11px;line-height:12px;color:#808080;letter-spacing:-0.035px;text-shadow:1px 1px #fff;">Stop</div>
<div class="a" style="left:465.4px;top:80.4px;font-family:'Liberation Sans', sans-serif;font-size:11px;line-height:12px;color:#000;letter-spacing:-0.017px;">Aceptar</div>
<div class="a" style="left:511.29999999999995px;top:80.4px;font-family:'Liberation Sans', sans-serif;font-size:11px;line-height:12px;color:#000;letter-spacing:-0.323px;">Guardar</div>
<div class="a" style="left:569.9px;top:80.4px;font-family:'Liberation Sans', sans-serif;font-size:11px;line-height:12px;color:#000;letter-spacing:-0.527px;">Imprimir</div>
<div class="a" style="left:622.1999999999999px;top:80.4px;font-family:'Liberation Sans', sans-serif;font-size:11px;line-height:12px;color:#000;letter-spacing:-0.267px;">DXF</div>
<div class="a" style="left:660.1px;top:80.4px;font-family:'Liberation Sans', sans-serif;font-size:11px;line-height:12px;color:#000;letter-spacing:-0.201px;">Reflejar</div>
<div class="a" style="left:707.0px;top:80.4px;font-family:'Liberation Sans', sans-serif;font-size:11px;line-height:12px;color:#000;letter-spacing:-0.222px;">Piezas</div>
<div class="a" style="left:421px;top:98px;width:1px;height:48px;background:#808080;"></div>
<div class="a" style="left:422px;top:98px;width:1px;height:48px;background:#fff;"></div>
<div class="a" style="left:519px;top:98px;width:1px;height:48px;background:#808080;"></div>
<div class="a" style="left:520px;top:98px;width:1px;height:48px;background:#fff;"></div>
<div class="a" style="left:572px;top:97px;width:1px;height:48px;background:#808080;"></div>
<div class="a" style="left:573px;top:97px;width:1px;height:48px;background:#fff;"></div>
<div class="a" style="left:373px;top:111px;width:97px;height:21px;background:#fff;box-shadow: inset 1px 1px #808080, inset 2px 2px #404040, inset -1px -1px #fff, inset -2px -2px #D4D0C8;"></div>
<div class="a" style="left:452px;top:113px;width:16px;height:17px;background:#D4D0C8;box-shadow: inset 1px 1px #D4D0C8, inset 2px 2px #fff, inset -1px -1px #404040, inset -2px -2px #808080;"></div>
<svg class="a" style="left:457px;top:120px" width="7" height="4" shape-rendering="crispEdges"><path d="M0 0h7v1h-1v1h-1v1h-1v1h-1v-1h-1v-1h-1v-1h-1z" fill="#000"/></svg>
<div class="a" style="left:377px;top:116px;font-family:'Liberation Sans', sans-serif;font-size:11px;line-height:12px;color:#000;">Spanish</div>
<div class="a" style="left:471px;top:111px;width:97px;height:21px;background:#fff;box-shadow: inset 1px 1px #808080, inset 2px 2px #404040, inset -1px -1px #fff, inset -2px -2px #D4D0C8;"></div>
<div class="a" style="left:550px;top:113px;width:16px;height:17px;background:#D4D0C8;box-shadow: inset 1px 1px #D4D0C8, inset 2px 2px #fff, inset -1px -1px #404040, inset -2px -2px #808080;"></div>
<svg class="a" style="left:555px;top:120px" width="7" height="4" shape-rendering="crispEdges"><path d="M0 0h7v1h-1v1h-1v1h-1v1h-1v-1h-1v-1h-1v-1h-1z" fill="#000"/></svg>
<div class="a" style="left:473.5px;top:116px;font-family:'Liberation Sans', sans-serif;font-size:11px;line-height:12px;color:#000;letter-spacing:-0.21px;">100%</div>
<div class="a" style="left:577px;top:115px;width:13px;height:13px;background:#fff;box-shadow: inset 1px 1px #808080, inset 2px 2px #404040, inset -1px -1px #fff, inset -2px -2px #D4D0C8;"></div>
<div class="a" style="left:596px;top:116px;font-family:'Liberation Sans', sans-serif;font-size:11px;line-height:12px;color:#000;">2 paneles</div>
<div class="a" style="left:375px;top:148px;width:44px;height:21px;background:repeating-conic-gradient(#D4D0C8 0% 25%, #fff 0% 50%) 0 0/2px 2px;box-shadow: inset 1px 1px #808080, inset 2px 2px #404040, inset -1px -1px #fff;"></div>
<div class="a" style="left:382.3px;top:153px;font-family:'Liberation Sans', sans-serif;font-size:11.5px;line-height:12px;color:#000;letter-spacing:-0.542px;">Hoja 1</div>
<div class="a" style="left:422px;top:148px;width:1px;height:21px;background:#808080;"></div>
<div class="a" style="left:423px;top:148px;width:1px;height:21px;background:#fff;"></div>
<div class="a" style="left:475px;top:148px;width:1px;height:21px;background:#808080;"></div>
<div class="a" style="left:476px;top:148px;width:1px;height:21px;background:#fff;"></div>
<div class="a" style="left:575px;top:148px;width:1px;height:21px;background:#808080;"></div>
<div class="a" style="left:576px;top:148px;width:1px;height:21px;background:#fff;"></div>
<div class="a" style="left:651px;top:148px;width:1px;height:21px;background:#808080;"></div>
<div class="a" style="left:652px;top:148px;width:1px;height:21px;background:#fff;"></div>
<div class="a" style="left:750px;top:148px;width:1px;height:21px;background:#808080;"></div>
<div class="a" style="left:751px;top:148px;width:1px;height:21px;background:#fff;"></div>
<div class="a" style="left:434px;top:152px;font-family:'Liberation Sans', sans-serif;font-size:11.5px;line-height:12px;color:#000;letter-spacing:-0.292px;">Hoja 2</div>
<div class="a" style="left:486.8px;top:151px;font-family:'Liberation Sans', sans-serif;font-size:12px;line-height:14px;color:#000;letter-spacing:-0.588px;">Estadísticas: 2D</div>
<div class="a" style="left:586.9px;top:151px;font-family:'Liberation Sans', sans-serif;font-size:12px;line-height:14px;color:#000;letter-spacing:-0.562px;">Gráfico: 1D</div>
<div class="a" style="left:662.2px;top:151px;font-family:'Liberation Sans', sans-serif;font-size:12px;line-height:14px;color:#000;letter-spacing:-0.506px;">Estadísticas: 1D</div>
<div class="a" style="left:377px;top:175px;width:484px;height:23px;box-shadow: inset 1px 1px #fff, inset 0 -1px #808080;"></div>
<div class="a" style="left:378px;top:180px;width:13px;height:13px;background:#fff;box-shadow: inset 1px 1px #808080, inset 2px 2px #404040, inset -1px -1px #fff, inset -2px -2px #D4D0C8;"></div>
<svg class="a" style="left:378px;top:180px" width="13" height="13" shape-rendering="crispEdges" fill="#000"><rect x="9" y="3" width="1" height="1"/><rect x="8" y="4" width="1" height="1"/><rect x="9" y="4" width="1" height="1"/><rect x="3" y="5" width="1" height="1"/><rect x="7" y="5" width="1" height="1"/><rect x="8" y="5" width="1" height="1"/><rect x="9" y="5" width="1" height="1"/><rect x="3" y="6" width="1" height="1"/><rect x="4" y="6" width="1" height="1"/><rect x="6" y="6" width="1" height="1"/><rect x="7" y="6" width="1" height="1"/><rect x="8" y="6" width="1" height="1"/><rect x="3" y="7" width="1" height="1"/><rect x="4" y="7" width="1" height="1"/><rect x="5" y="7" width="1" height="1"/><rect x="6" y="7" width="1" height="1"/><rect x="7" y="7" width="1" height="1"/><rect x="4" y="8" width="1" height="1"/><rect x="5" y="8" width="1" height="1"/><rect x="6" y="8" width="1" height="1"/><rect x="5" y="9" width="1" height="1"/></svg>
<div class="a" style="left:395.6px;top:181px;font-family:'Liberation Sans', sans-serif;font-size:11px;line-height:12px;color:#000;letter-spacing:-0.249px;">Mostrar el tamaño de las piezas</div>
<div class="a" style="left:556px;top:180px;width:13px;height:13px;background:#fff;box-shadow: inset 1px 1px #808080, inset 2px 2px #404040, inset -1px -1px #fff, inset -2px -2px #D4D0C8;"></div>
<div class="a" style="left:573.6px;top:181px;font-family:'Liberation Sans', sans-serif;font-size:11px;line-height:12px;color:#000;letter-spacing:-0.254px;">Mostrar el tamaño de los retales</div>
<div class="a" style="left:377px;top:175px;width:483px;height:22px;overflow:hidden">
<div class="a" style="left:358px;top:5px;width:13px;height:13px;background:#fff;box-shadow: inset 1px 1px #808080, inset 2px 2px #404040, inset -1px -1px #fff, inset -2px -2px #D4D0C8;"></div>
<svg class="a" style="left:358px;top:5px" width="13" height="13" shape-rendering="crispEdges" fill="#000"><rect x="9" y="3" width="1" height="1"/><rect x="8" y="4" width="1" height="1"/><rect x="9" y="4" width="1" height="1"/><rect x="3" y="5" width="1" height="1"/><rect x="7" y="5" width="1" height="1"/><rect x="8" y="5" width="1" height="1"/><rect x="9" y="5" width="1" height="1"/><rect x="3" y="6" width="1" height="1"/><rect x="4" y="6" width="1" height="1"/><rect x="6" y="6" width="1" height="1"/><rect x="7" y="6" width="1" height="1"/><rect x="8" y="6" width="1" height="1"/><rect x="3" y="7" width="1" height="1"/><rect x="4" y="7" width="1" height="1"/><rect x="5" y="7" width="1" height="1"/><rect x="6" y="7" width="1" height="1"/><rect x="7" y="7" width="1" height="1"/><rect x="4" y="8" width="1" height="1"/><rect x="5" y="8" width="1" height="1"/><rect x="6" y="8" width="1" height="1"/><rect x="5" y="9" width="1" height="1"/></svg>
<div class="a" style="left:375.6px;top:6px;font-family:'Liberation Sans', sans-serif;font-size:11px;line-height:12px;color:#000;letter-spacing:-0.162px;">Mostrar la etiqueta de l</div>
</div>
<div class="a" style="left:376px;top:198px;width:485px;height:1px;background:#808080;"></div>
<div class="a" style="left:377px;top:199px;width:398px;height:383px;background:#fff;"></div>
<div class="a" style="left:775px;top:199px;width:68px;height:383px;background:#D4D0C8;box-shadow: inset 0 1px #fff;"></div>
<div class="a" style="left:843px;top:199px;width:17px;height:382px;background:repeating-conic-gradient(#D4D0C8 0% 25%, #fff 0% 50%) 0 0/2px 2px;"></div>
<div class="a" style="left:843px;top:199px;width:17px;height:17px;background:#D4D0C8;box-shadow: inset 1px 1px #D4D0C8, inset 2px 2px #fff, inset -1px -1px #404040, inset -2px -2px #808080;"></div>
<svg class="a" style="left:848px;top:205px" width="7" height="4" shape-rendering="crispEdges"><path d="M3 0h1v1h1v1h1v1h1v1h-7v-1h1v-1h1v-1h1z" fill="#000"/></svg>
<div class="a" style="left:843px;top:216px;width:17px;height:348px;background:#D4D0C8;box-shadow: inset 1px 1px #D4D0C8, inset 2px 2px #fff, inset -1px -1px #404040, inset -2px -2px #808080;"></div>
<div class="a" style="left:843px;top:565px;width:17px;height:16px;background:#D4D0C8;box-shadow: inset 1px 1px #D4D0C8, inset 2px 2px #fff, inset -1px -1px #404040, inset -2px -2px #808080;"></div>
<svg class="a" style="left:848px;top:571px" width="7" height="4" shape-rendering="crispEdges"><path d="M0 0h7v1h-1v1h-1v1h-1v1h-1v-1h-1v-1h-1v-1h-1z" fill="#000"/></svg>
<div class="a" style="left:377px;top:581px;width:483px;height:17px;background:repeating-conic-gradient(#D4D0C8 0% 25%, #fff 0% 50%) 0 0/2px 2px;"></div>
<div class="a" style="left:377px;top:581px;width:16px;height:17px;background:#D4D0C8;box-shadow: inset 1px 1px #D4D0C8, inset 2px 2px #fff, inset -1px -1px #404040, inset -2px -2px #808080;"></div>
<svg class="a" style="left:382px;top:585px" width="5" height="8" shape-rendering="crispEdges"><path d="M4 0h1v8h-1v-1h-1v-1h-1v-1h-1v-2h1v-1h1v-1h1z" fill="#000"/></svg>
<div class="a" style="left:393px;top:581px;width:450px;height:17px;background:#D4D0C8;box-shadow: inset 1px 1px #D4D0C8, inset 2px 2px #fff, inset -1px -1px #404040, inset -2px -2px #808080;"></div>
<div class="a" style="left:843px;top:581px;width:17px;height:17px;background:#D4D0C8;box-shadow: inset 1px 1px #D4D0C8, inset 2px 2px #fff, inset -1px -1px #404040, inset -2px -2px #808080;"></div>
<svg class="a" style="left:850px;top:585px" width="5" height="8" shape-rendering="crispEdges"><path d="M0 0h1v1h1v1h1v1h1v2h-1v1h-1v1h-1v1h-1z" fill="#000"/></svg>
<div class="a" style="left:376px;top:598px;width:485px;height:1px;background:#fff;"></div>
<div class="a" style="left:860px;top:198px;width:1px;height:401px;background:#fff;"></div>
<svg class="a" style="left:0;top:0" width="870" height="628" shape-rendering="crispEdges"><defs><pattern id="hatch" patternUnits="userSpaceOnUse" width="3" height="3"><rect width="3" height="3" fill="#fff"/><rect x="2" y="0" width="1" height="1" fill="#000"/><rect x="1" y="1" width="1" height="1" fill="#000"/><rect x="0" y="2" width="1" height="1" fill="#000"/></pattern></defs><rect x="459" y="291" width="3" height="79" fill="url(#hatch)"/><rect x="393" y="446" width="69" height="13" fill="url(#hatch)"/><rect x="532" y="381" width="21" height="78" fill="url(#hatch)"/><rect x="553" y="454" width="133" height="5" fill="url(#hatch)"/><rect x="393" y="215" width="69" height="1" fill="#000"/><rect x="393" y="290" width="69" height="1" fill="#000"/><rect x="393" y="215" width="1" height="76" fill="#000"/><rect x="461" y="215" width="1" height="76" fill="#000"/><rect x="393" y="291" width="66" height="1" fill="#000"/><rect x="393" y="369" width="66" height="1" fill="#000"/><rect x="393" y="291" width="1" height="79" fill="#000"/><rect x="458" y="291" width="1" height="79" fill="#000"/><rect x="393" y="370" width="69" height="1" fill="#000"/><rect x="393" y="445" width="69" height="1" fill="#000"/><rect x="393" y="370" width="1" height="76" fill="#000"/><rect x="461" y="370" width="1" height="76" fill="#000"/><rect x="462" y="215" width="91" height="1" fill="#000"/><rect x="462" y="296" width="91" height="1" fill="#000"/><rect x="462" y="215" width="1" height="82" fill="#000"/><rect x="552" y="215" width="1" height="82" fill="#000"/><rect x="462" y="297" width="91" height="1" fill="#000"/><rect x="462" y="380" width="91" height="1" fill="#000"/><rect x="462" y="297" width="1" height="84" fill="#000"/><rect x="552" y="297" width="1" height="84" fill="#000"/><rect x="462" y="381" width="70" height="1" fill="#000"/><rect x="462" y="457" width="70" height="1" fill="#000"/><rect x="462" y="381" width="1" height="77" fill="#000"/><rect x="531" y="381" width="1" height="77" fill="#000"/><rect x="553" y="215" width="66" height="1" fill="#000"/><rect x="553" y="293" width="66" height="1" fill="#000"/><rect x="553" y="215" width="1" height="79" fill="#000"/><rect x="618" y="215" width="1" height="79" fill="#000"/><rect x="553" y="294" width="66" height="1" fill="#000"/><rect x="553" y="373" width="66" height="1" fill="#000"/><rect x="553" y="294" width="1" height="80" fill="#000"/><rect x="618" y="294" width="1" height="80" fill="#000"/><rect x="553" y="374" width="66" height="1" fill="#000"/><rect x="553" y="453" width="66" height="1" fill="#000"/><rect x="553" y="374" width="1" height="80" fill="#000"/><rect x="618" y="374" width="1" height="80" fill="#000"/><rect x="619" y="215" width="67" height="1" fill="#000"/><rect x="619" y="293" width="67" height="1" fill="#000"/><rect x="619" y="215" width="1" height="79" fill="#000"/><rect x="685" y="215" width="1" height="79" fill="#000"/><rect x="619" y="294" width="67" height="1" fill="#000"/><rect x="619" y="373" width="67" height="1" fill="#000"/><rect x="619" y="294" width="1" height="80" fill="#000"/><rect x="685" y="294" width="1" height="80" fill="#000"/><rect x="619" y="374" width="67" height="1" fill="#000"/><rect x="619" y="453" width="67" height="1" fill="#000"/><rect x="619" y="374" width="1" height="80" fill="#000"/><rect x="685" y="374" width="1" height="80" fill="#000"/><rect x="686" y="215" width="73" height="1" fill="#000"/><rect x="686" y="275" width="73" height="1" fill="#000"/><rect x="686" y="215" width="1" height="61" fill="#000"/><rect x="758" y="215" width="1" height="61" fill="#000"/><rect x="686" y="276" width="73" height="1" fill="#000"/><rect x="686" y="336" width="73" height="1" fill="#000"/><rect x="686" y="276" width="1" height="61" fill="#000"/><rect x="758" y="276" width="1" height="61" fill="#000"/><rect x="686" y="337" width="73" height="1" fill="#000"/><rect x="686" y="397" width="73" height="1" fill="#000"/><rect x="686" y="337" width="1" height="61" fill="#000"/><rect x="758" y="337" width="1" height="61" fill="#000"/><rect x="686" y="398" width="73" height="1" fill="#000"/><rect x="686" y="459" width="73" height="1" fill="#000"/><rect x="686" y="398" width="1" height="62" fill="#000"/><rect x="758" y="398" width="1" height="62" fill="#000"/><rect x="393" y="458" width="70" height="1" fill="#000"/><rect x="553" y="458" width="133" height="1" fill="#000"/><rect x="532" y="458" width="21" height="1" fill="#000"/><rect x="462" y="215" width="1" height="245" fill="#005800"/><rect x="553" y="215" width="1" height="245" fill="#005800"/><rect x="619" y="215" width="1" height="245" fill="#005800"/><rect x="686" y="215" width="1" height="245" fill="#005800"/><rect x="759" y="215" width="1" height="245" fill="#005800"/><rect x="553" y="454" width="133" height="1" fill="#005800"/><rect x="553" y="374" width="133" height="1" fill="#004000"/></svg>
<div class="a" style="left:327.5px;width:200px;text-align:center;top:218px;font-family:'Liberation Serif', serif;font-size:12px;line-height:14px;color:#000;">570</div>
<div class="a" style="left:303.0px;top:244.0px;width:200px;height:14px;line-height:14px;text-align:center;font-family:'Liberation Serif', serif;font-size:12px;transform:rotate(-90deg);letter-spacing:1.5px;">620</div>
<div class="a" style="left:333.5px;top:244.5px;width:200px;height:15px;line-height:15px;text-align:center;font-family:'Liberation Serif', serif;font-size:13px;transform:rotate(-90deg);letter-spacing:1.469px;">john</div>
<div class="a" style="left:326.0px;width:200px;text-align:center;top:294px;font-family:'Liberation Serif', serif;font-size:12px;line-height:14px;color:#000;">540</div>
<div class="a" style="left:303.0px;top:321.5px;width:200px;height:14px;line-height:14px;text-align:center;font-family:'Liberation Serif', serif;font-size:12px;transform:rotate(-90deg);letter-spacing:1.5px;">650</div>
<div class="a" style="left:332.0px;top:322.0px;width:200px;height:15px;line-height:15px;text-align:center;font-family:'Liberation Serif', serif;font-size:13px;transform:rotate(-90deg);letter-spacing:0.722px;">jenny</div>
<div class="a" style="left:327.5px;width:200px;text-align:center;top:373px;font-family:'Liberation Serif', serif;font-size:12px;line-height:14px;color:#000;">570</div>
<div class="a" style="left:303.0px;top:399.0px;width:200px;height:14px;line-height:14px;text-align:center;font-family:'Liberation Serif', serif;font-size:12px;transform:rotate(-90deg);letter-spacing:1.5px;">620</div>
<div class="a" style="left:333.5px;top:399.5px;width:200px;height:15px;line-height:15px;text-align:center;font-family:'Liberation Serif', serif;font-size:13px;transform:rotate(-90deg);letter-spacing:1.469px;">john</div>
<div class="a" style="left:407.5px;width:200px;text-align:center;top:218px;font-family:'Liberation Serif', serif;font-size:12px;line-height:14px;color:#000;">740</div>
<div class="a" style="left:372.0px;top:247.0px;width:200px;height:14px;line-height:14px;text-align:center;font-family:'Liberation Serif', serif;font-size:12px;transform:rotate(-90deg);letter-spacing:1.5px;">680</div>
<div class="a" style="left:416.29999999999995px;width:200px;text-align:center;top:255.10000000000002px;font-family:'Liberation Serif', serif;font-size:13px;line-height:15px;color:#000;letter-spacing:0.509px;">jason</div>
<div class="a" style="left:407.5px;width:200px;text-align:center;top:300px;font-family:'Liberation Serif', serif;font-size:12px;line-height:14px;color:#000;">740</div>
<div class="a" style="left:372.0px;top:330.0px;width:200px;height:14px;line-height:14px;text-align:center;font-family:'Liberation Serif', serif;font-size:12px;transform:rotate(-90deg);letter-spacing:1.5px;">680</div>
<div class="a" style="left:416.29999999999995px;width:200px;text-align:center;top:338.1px;font-family:'Liberation Serif', serif;font-size:13px;line-height:15px;color:#000;letter-spacing:0.509px;">jason</div>
<div class="a" style="left:397.0px;width:200px;text-align:center;top:384px;font-family:'Liberation Serif', serif;font-size:12px;line-height:14px;color:#000;">570</div>
<div class="a" style="left:372.0px;top:410.5px;width:200px;height:14px;line-height:14px;text-align:center;font-family:'Liberation Serif', serif;font-size:12px;transform:rotate(-90deg);letter-spacing:1.5px;">620</div>
<div class="a" style="left:403.0px;top:411.0px;width:200px;height:15px;line-height:15px;text-align:center;font-family:'Liberation Serif', serif;font-size:13px;transform:rotate(-90deg);letter-spacing:1.469px;">john</div>
<div class="a" style="left:486.0px;width:200px;text-align:center;top:218px;font-family:'Liberation Serif', serif;font-size:12px;line-height:14px;color:#000;">540</div>
<div class="a" style="left:463.0px;top:245.5px;width:200px;height:14px;line-height:14px;text-align:center;font-family:'Liberation Serif', serif;font-size:12px;transform:rotate(-90deg);letter-spacing:1.5px;">650</div>
<div class="a" style="left:492.0px;top:246.0px;width:200px;height:15px;line-height:15px;text-align:center;font-family:'Liberation Serif', serif;font-size:13px;transform:rotate(-90deg);letter-spacing:0.722px;">jenny</div>
<div class="a" style="left:486.0px;width:200px;text-align:center;top:297px;font-family:'Liberation Serif', serif;font-size:12px;line-height:14px;color:#000;">540</div>
<div class="a" style="left:463.0px;top:325.0px;width:200px;height:14px;line-height:14px;text-align:center;font-family:'Liberation Serif', serif;font-size:12px;transform:rotate(-90deg);letter-spacing:1.5px;">650</div>
<div class="a" style="left:492.0px;top:325.5px;width:200px;height:15px;line-height:15px;text-align:center;font-family:'Liberation Serif', serif;font-size:13px;transform:rotate(-90deg);letter-spacing:0.722px;">jenny</div>
<div class="a" style="left:486.0px;width:200px;text-align:center;top:377px;font-family:'Liberation Serif', serif;font-size:12px;line-height:14px;color:#000;">540</div>
<div class="a" style="left:463.0px;top:405.0px;width:200px;height:14px;line-height:14px;text-align:center;font-family:'Liberation Serif', serif;font-size:12px;transform:rotate(-90deg);letter-spacing:1.5px;">650</div>
<div class="a" style="left:492.0px;top:405.5px;width:200px;height:15px;line-height:15px;text-align:center;font-family:'Liberation Serif', serif;font-size:13px;transform:rotate(-90deg);letter-spacing:0.722px;">jenny</div>
<div class="a" style="left:552.5px;width:200px;text-align:center;top:218px;font-family:'Liberation Serif', serif;font-size:12px;line-height:14px;color:#000;">540</div>
<div class="a" style="left:529.0px;top:245.5px;width:200px;height:14px;line-height:14px;text-align:center;font-family:'Liberation Serif', serif;font-size:12px;transform:rotate(-90deg);letter-spacing:1.5px;">650</div>
<div class="a" style="left:558.5px;top:246.0px;width:200px;height:15px;line-height:15px;text-align:center;font-family:'Liberation Serif', serif;font-size:13px;transform:rotate(-90deg);letter-spacing:0.722px;">jenny</div>
<div class="a" style="left:552.5px;width:200px;text-align:center;top:297px;font-family:'Liberation Serif', serif;font-size:12px;line-height:14px;color:#000;">540</div>
<div class="a" style="left:529.0px;top:325.0px;width:200px;height:14px;line-height:14px;text-align:center;font-family:'Liberation Serif', serif;font-size:12px;transform:rotate(-90deg);letter-spacing:1.5px;">650</div>
<div class="a" style="left:558.5px;top:325.5px;width:200px;height:15px;line-height:15px;text-align:center;font-family:'Liberation Serif', serif;font-size:13px;transform:rotate(-90deg);letter-spacing:0.722px;">jenny</div>
<div class="a" style="left:552.5px;width:200px;text-align:center;top:377px;font-family:'Liberation Serif', serif;font-size:12px;line-height:14px;color:#000;">540</div>
<div class="a" style="left:529.0px;top:405.0px;width:200px;height:14px;line-height:14px;text-align:center;font-family:'Liberation Serif', serif;font-size:12px;transform:rotate(-90deg);letter-spacing:1.5px;">650</div>
<div class="a" style="left:558.5px;top:405.5px;width:200px;height:15px;line-height:15px;text-align:center;font-family:'Liberation Serif', serif;font-size:13px;transform:rotate(-90deg);letter-spacing:0.722px;">jenny</div>
<div class="a" style="left:622.5px;width:200px;text-align:center;top:218px;font-family:'Liberation Serif', serif;font-size:12px;line-height:14px;color:#000;">600</div>
<div class="a" style="left:596.0px;top:236.5px;width:200px;height:14px;line-height:14px;text-align:center;font-family:'Liberation Serif', serif;font-size:12px;transform:rotate(-90deg);letter-spacing:1.5px;">500</div>
<div class="a" style="left:628.3px;width:200px;text-align:center;top:244.60000000000002px;font-family:'Liberation Serif', serif;font-size:13px;line-height:15px;color:#000;letter-spacing:-0.25px;">mike</div>
<div class="a" style="left:622.5px;width:200px;text-align:center;top:279px;font-family:'Liberation Serif', serif;font-size:12px;line-height:14px;color:#000;">600</div>
<div class="a" style="left:596.0px;top:297.5px;width:200px;height:14px;line-height:14px;text-align:center;font-family:'Liberation Serif', serif;font-size:12px;transform:rotate(-90deg);letter-spacing:1.5px;">500</div>
<div class="a" style="left:628.3px;width:200px;text-align:center;top:305.6px;font-family:'Liberation Serif', serif;font-size:13px;line-height:15px;color:#000;letter-spacing:-0.25px;">mike</div>
<div class="a" style="left:622.5px;width:200px;text-align:center;top:340px;font-family:'Liberation Serif', serif;font-size:12px;line-height:14px;color:#000;">600</div>
<div class="a" style="left:596.0px;top:358.5px;width:200px;height:14px;line-height:14px;text-align:center;font-family:'Liberation Serif', serif;font-size:12px;transform:rotate(-90deg);letter-spacing:1.5px;">500</div>
<div class="a" style="left:628.3px;width:200px;text-align:center;top:366.6px;font-family:'Liberation Serif', serif;font-size:13px;line-height:15px;color:#000;letter-spacing:-0.25px;">mike</div>
<div class="a" style="left:622.5px;width:200px;text-align:center;top:401px;font-family:'Liberation Serif', serif;font-size:12px;line-height:14px;color:#000;">600</div>
<div class="a" style="left:596.0px;top:420.0px;width:200px;height:14px;line-height:14px;text-align:center;font-family:'Liberation Serif', serif;font-size:12px;transform:rotate(-90deg);letter-spacing:1.5px;">500</div>
<div class="a" style="left:628.3px;width:200px;text-align:center;top:428.1px;font-family:'Liberation Serif', serif;font-size:13px;line-height:15px;color:#000;letter-spacing:-0.25px;">mike</div>
<div class="a" style="left:476px;width:200px;text-align:center;top:202px;font-family:'Liberation Serif', serif;font-size:12px;line-height:14px;color:#000;">3000</div>
<div class="a" style="left:287.0px;top:330.0px;width:200px;height:14px;line-height:14px;text-align:center;font-family:'Liberation Serif', serif;font-size:12px;transform:rotate(-90deg);letter-spacing:0.0px;">2000</div>
<div class="a" style="left:388px;top:460px;font-family:'Liberation Serif', serif;font-size:13px;line-height:15px;color:#000;letter-spacing:-0.085px;">Material = glass ; Etiqueta = 2D ; Cantidad = 1 ; Utilización = 5723600^2</div>
<div class="a" style="left:0px;top:603px;width:868px;height:1px;background:#808080;"></div>
<div class="a" style="left:0px;top:604px;width:868px;height:1px;background:#fff;"></div>
<div class="a" style="left:3px;top:607px;width:149px;height:17px;box-shadow: inset 1px 1px #808080, inset -1px -1px #fff;"></div>
<div class="a" style="left:154px;top:607px;width:149px;height:17px;box-shadow: inset 1px 1px #808080, inset -1px -1px #fff;"></div>
<div class="a" style="left:304px;top:607px;width:149px;height:17px;box-shadow: inset 1px 1px #808080, inset -1px -1px #fff;"></div>
<div class="a" style="left:454px;top:607px;width:150px;height:17px;box-shadow: inset 1px 1px #808080, inset -1px -1px #fff;"></div>
<div class="a" style="left:605px;top:607px;width:199px;height:17px;box-shadow: inset 1px 1px #808080, inset -1px -1px #fff;"></div>
<div class="a" style="left:805px;top:607px;width:61px;height:17px;box-shadow: inset 1px 1px #808080, inset -1px -1px #fff;"></div>
<div class="a" style="left:3.4px;top:610px;font-family:'Liberation Sans', sans-serif;font-size:11px;line-height:12px;color:#000;letter-spacing:0.031px;">Utilización:95,393 %</div>
<div class="a" style="left:155.4px;top:610px;font-family:'Liberation Sans', sans-serif;font-size:11px;line-height:12px;color:#000;letter-spacing:-0.013px;">Desecho:0 %</div>
<div class="a" style="left:306.7px;top:610px;font-family:'Liberation Sans', sans-serif;font-size:11px;line-height:12px;color:#000;letter-spacing:0.018px;">Cantidad:1</div>
<div class="a" style="left:456.3px;top:610px;font-family:'Liberation Sans', sans-serif;font-size:11px;line-height:12px;color:#000;letter-spacing:0.406px;">(-, -)</div>
<svg class="a" style="left:852px;top:610px" width="14" height="14" shape-rendering="crispEdges"><path d="M12 1l-11 11M12 4l-8 8M12 7l-5 5M12 10l-2 2" stroke="#fff" stroke-width="1"/><path d="M13 1l-12 12M13 4l-9 9M13 7l-6 6M13 10l-3 3" stroke="#808080" stroke-width="1"/></svg>
</body></html>
